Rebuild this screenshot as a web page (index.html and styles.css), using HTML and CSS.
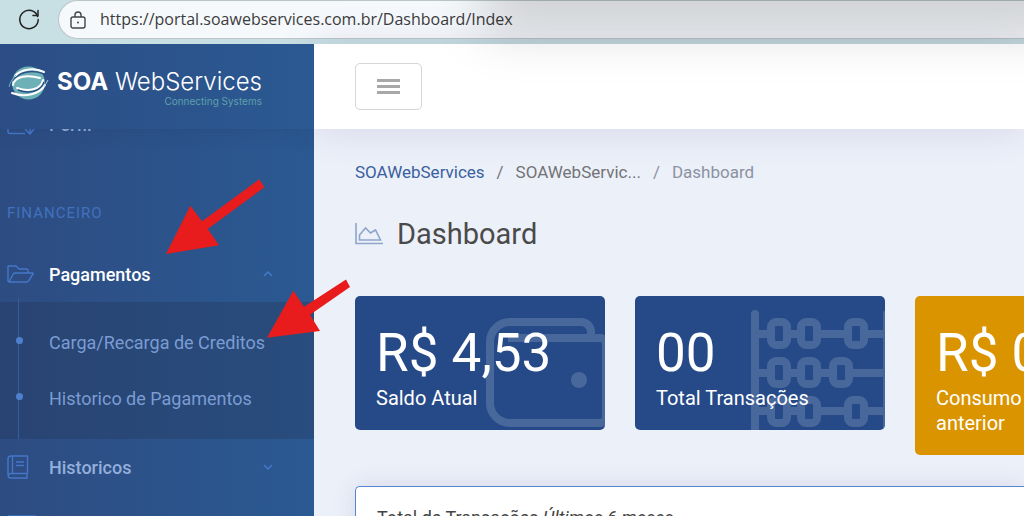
FILE: index.html
```
<!DOCTYPE html>
<html lang="pt-br">
<head>
  <meta charset="UTF-8" />
  <meta name="viewport" content="width=device-width, initial-scale=1" />
  <title>Dashboard - SOAWebServices</title>
  <link rel="stylesheet" href="styles.css">
</head>
<body>
  <div class="browser-bar">
    <button class="btn-reload" aria-label="Atualizar">
      <svg width="24" height="24" viewBox="0 0 24 24" fill="none" stroke="#222" stroke-width="1.500" stroke-linecap="round" stroke-linejoin="round">
        <path d="M20.700 9.500A9.200 9.200 0 1 0 21.200 12.500" />
        <path d="M21 3.500V8.500H16" />
      </svg>
    </button>
    <div class="address">
      <svg width="16" height="18" viewBox="0 0 16 18" fill="none" stroke="#444" stroke-width="1.400">
        <rect x="1" y="6" width="14" height="11" rx="2" />
        <path d="M5 6V4a3 3 0 0 1 6 0v2" />
        <circle cx="8" cy="11.500" r="1" fill="#444" stroke="none" />
      </svg>
      <input type="text" class="url" aria-label="Endereço" value="https://portal.soawebservices.com.br/Dashboard/Index">
    </div>
  </div>

  <div class="page">
    <aside class="sidebar">
      <a href="#" class="brand">
        <svg width="42" height="36" viewBox="0 0 42 36" fill="none">
          <circle cx="20.500" cy="18" r="16.500" fill="#6db1b6" />
          <path d="M5 16C10 7 24 4 36 9" stroke="#2c5088" stroke-width="1.500" />
          <path d="M7 11C14 3 28 3 36 7" stroke="#fff" stroke-width="2" stroke-linecap="round" />
          <path d="M5 20C6 12 18 9 32 13" stroke="#fff" stroke-width="2" stroke-linecap="round" />
          <path d="M9 23C20 27 33 25 35 15" stroke="#fff" stroke-width="2" stroke-linecap="round" />
          <path d="M10 25C20 29 33 27 36 17" stroke="#2c5088" stroke-width="1.500" />
          <path d="M4 28C17 33 32 29 37 20" stroke="#fff" stroke-width="2" stroke-linecap="round" />
          <path d="M36 22L40 15" stroke="#b5d5dc" stroke-width="1" />
          <path d="M1 22C2 18 4 14 8 10" stroke="#6db1b6" />
        </svg>
        <span class="brand-text">
          <span class="brand-name"><b>SOA</b> WebServices</span>
          <span class="brand-slogan">Connecting Systems</span>
        </span>
      </a>

      <nav class="nav">
        <ul class="menu">
          <li>
            <a href="#" class="item">
              <svg width="28" height="22" viewBox="0 0 28 22" fill="none" stroke="#4577c8" stroke-width="1.500">
                <path d="M18 20.500H3a2 2 0 0 1-2-2V3a2 2 0 0 1 2-2h20a2 2 0 0 1 2 2v9" />
                <path d="M23 11v10M18 16l5 5 4-5" />
              </svg>
              <span>Perfil</span>
            </a>
          </li>
          <li class="menu-title">FINANCEIRO</li>
          <li>
            <a href="#" class="item active">
              <svg width="28" height="20" viewBox="0 0 28 20" fill="none" stroke="#4577c8" stroke-width="1.400" stroke-linejoin="round">
                <path d="M2 18L1 17V2.500L2 2H9L12 5H20L21 6V9" />
                <path d="M2 18L6.500 9.500L8 9H26V10L21.500 17L20 18Z" />
              </svg>
              <span>Pagamentos</span>
              <svg class="chevron" width="10" height="6" viewBox="0 0 10 6" fill="none" stroke="#4577c8" stroke-width="1.500"><path d="M1 5l4-4 4 4" /></svg>
            </a>
            <ul class="submenu">
              <li><a href="#" class="subitem">Carga/Recarga de Creditos</a></li>
              <li><a href="#" class="subitem">Historico de Pagamentos</a></li>
            </ul>
          </li>
          <li>
            <a href="#" class="item">
              <svg width="28" height="24" viewBox="0 0 28 24" fill="none" stroke="#4577c8" stroke-width="1.400">
                <path d="M20.500 18.500V1H4Q1 1 1 4V20" />
                <path d="M20.500 18.500H3.500a2 2 0 0 0 0 4.500H20V18.500M5.500 1V18.500M9 7H17M9 10.500H17" />
              </svg>
              <span>Historicos</span>
              <svg class="chevron" width="10" height="6" viewBox="0 0 10 6" fill="none" stroke="#4577c8" stroke-width="1.500"><path d="M1 1l4 4 4-4" /></svg>
            </a>
          </li>
          <li>
            <a href="#" class="item" aria-label="Menu">
              <svg width="30" height="16" viewBox="0 0 30 16" fill="none" stroke="#4577c8" stroke-width="1.500"><rect x="1" y="1" width="28" height="14" rx="1" /></svg>
            </a>
          </li>
        </ul>
      </nav>
    </aside>

    <div class="content">
      <header class="topbar">
        <button class="btn-menu" aria-label="Abrir menu">
          <svg width="23" height="16" viewBox="0 0 23 16" fill="#a8a8a8"><path d="M0 0h23v3H0zM0 6h23v3H0zM0 12h23v3H0z" /></svg>
        </button>
      </header>

      <main>
        <ol class="breadcrumb">
          <li><a href="#">SOAWebServices</a></li>
          <li>SOAWebServic...</li>
          <li class="current">Dashboard</li>
        </ol>

        <h1>
          <svg width="28" height="22" viewBox="0 0 28 22" fill="none" stroke="#8fa5cc" stroke-width="1.600">
            <path d="M1 0V20.500H28" />
            <path d="M4.500 17V12L10.500 5L15.500 10L20.500 7L25.500 17Z" />
          </svg>
          Dashboard
        </h1>

        <div class="cards">
          <div class="card">
            <svg class="card-icon wallet" width="124" height="109" viewBox="0 0 124 109" fill="none" stroke="#fff" stroke-width="8" opacity=".16">
              <path d="M105 16V14a10 10 0 0 0-10-10H24A20 20 0 0 0 4 24V85a20 20 0 0 0 20 20H114a6 6 0 0 0 6-6V26a6 6 0 0 0-6-6H22" />
              <circle cx="93" cy="62" r="8" fill="#fff" stroke="none" />
            </svg>
            <h3>R$ 4,53</h3>
            <p>Saldo Atual</p>
          </div>

          <div class="card">
            <svg class="card-icon abacus" width="140" height="124" viewBox="0 0 140 124" fill="none" stroke="#fff" stroke-width="8" opacity=".16">
              <path d="M4 124V4M136 124V4" stroke-linecap="round" />
              <path d="M8 24h8M40 24h6M70 24h23M117 24h15" />
              <path d="M8 63h8M40 63h6M70 63h8M102 63h30" />
              <path d="M8 101h8M40 101h6M70 101h23M117 101h15" />
              <rect x="20" y="12" width="16" height="23" rx="5" />
              <rect x="50" y="12" width="16" height="23" rx="5" />
              <rect x="97" y="12" width="16" height="23" rx="5" />
              <rect x="20" y="51" width="16" height="23" rx="5" />
              <rect x="50" y="51" width="16" height="23" rx="5" />
              <rect x="82" y="51" width="16" height="23" rx="5" />
              <rect x="20" y="90" width="16" height="23" rx="5" />
              <rect x="50" y="90" width="16" height="23" rx="5" />
              <rect x="97" y="90" width="16" height="23" rx="5" />
            </svg>
            <h3>00</h3>
            <p>Total Transações</p>
          </div>

          <div class="card card-warning">
            <h3>R$ 0</h3>
            <p>Consumo<br>anterior</p>
          </div>
        </div>

        <section class="panel">
          <h2>Total de Transações <em>Últimos 6 meses</em></h2>
        </section>
      </main>
    </div>
  </div>

  <div class="window-shadow"></div>

  <!-- setas do passo a passo -->
  <svg class="arrow arrow-1" width="100" height="76" viewBox="0 0 100 76">
    <polygon fill="#e81c1c" points="0,75 24.300,26.700 36,42.300 93.300,0.300 98.300,8.300 41.700,50 53,66.300" />
  </svg>
  <svg class="arrow arrow-2" width="84" height="60" viewBox="0 0 84 60">
    <polygon fill="#e81c1c" points="0,58.700 26.300,11.700 37,27.700 79,0.500 83,8 43,35.700 53,52" />
  </svg>
</body>
</html>
```
FILE: styles.css
```
* {
  box-sizing: border-box;
}
body {
  margin: 0;
  height: 100vh;
  overflow: hidden;
  position: relative;
  display: flex;
  flex-direction: column;
  font-family: Roboto, "Liberation Sans", sans-serif;
  font-size: 18px;
  background: #ecf0f9;
}
ul, ol {
  list-style: none;
  margin: 0;
  padding: 0;
}
a {
  text-decoration: none;
}
h1, h2, h3, p {
  margin: 0;
  font-weight: 400;
}
svg {
  display: block;
  flex-shrink: 0;
}

/* barra do navegador */
.browser-bar {
  flex-shrink: 0;
  display: flex;
  align-items: flex-start;
  height: 44px;
  padding-left: 17px;
  background: #c8dfe3;
}
.btn-reload {
  margin-top: 7px;
  padding: 0;
  width: 24px;
  border: none;
  background: none;
}
.address {
  flex: 1;
  display: flex;
  align-items: center;
  gap: 14px;
  height: 39px;
  margin-left: 17px;
  padding-left: 11px;
  border: 1px solid #bcc6c9;
  border-right: none;
  border-radius: 20px 0 0 20px;
  background: #f6f9fc;
}
.url {
  flex: 1;
  padding: 0 0 2px;
  border: none;
  outline: none;
  background: none;
  font-family: "Open Sans", "Noto Sans", sans-serif;
  font-size: 16px;
  color: #3c3c3c;
}
.window-shadow {
  position: absolute;
  top: -60px;
  left: 500px;
  right: -80px;
  height: 60px;
  box-shadow: 0 14px 54px 16px rgba(0, 0, 0, 0.17);
}

.page {
  flex: 1;
  display: flex;
  min-height: 0;
}

/* menu lateral */
.sidebar {
  width: 314px;
  flex-shrink: 0;
  overflow: hidden;
  background: linear-gradient(90deg, #2d4c82, #2b5992);
}
.brand {
  position: relative;
  z-index: 1;
  display: flex;
  align-items: flex-start;
  gap: 7px;
  height: 85px;
  padding: 21px 0 0 8px;
  background: linear-gradient(90deg, #2c4d85, #2b5992);
  box-shadow: 0 0 20px rgba(30, 50, 90, 0.2);
  color: #fff;
}
.brand-text {
  display: flex;
  flex-direction: column;
  align-items: flex-end;
  padding-top: 4px;
}
.brand-name {
  font-family: Inter, sans-serif;
  font-size: 24px;
  font-weight: 300;
  line-height: 26px;
}
.brand-name b {
  font-weight: 700;
}
.brand-slogan {
  font-family: Inter, sans-serif;
  font-size: 10px;
  line-height: 12px;
  color: #5da0ac;
}
/* lista rolada por baixo do logo */
.nav {
  margin-top: -33px;
}
.item {
  display: flex;
  align-items: center;
  gap: 14px;
  height: 56px;
  padding: 0 41px 0 7px;
  color: #94afdb;
  font-weight: 500;
}
.item.active {
  color: #fff;
}
.chevron {
  margin-left: auto;
}
.menu-title {
  padding: 51px 7px 23px;
  font-size: 15px;
  line-height: 20px;
  letter-spacing: 1px;
  color: #4271be;
}
.submenu {
  position: relative;
  padding: 13px 0 12px;
  background: rgba(34, 50, 80, 0.3);
}
.submenu::before {
  content: "";
  position: absolute;
  left: 18px;
  top: -4px;
  bottom: 0;
  width: 1px;
  background: #355d9e;
}
.subitem {
  position: relative;
  display: flex;
  align-items: center;
  height: 56px;
  padding: 0 0 2px 49px;
  color: #7b9cd3;
}
.subitem::before {
  content: "";
  position: absolute;
  left: 16px;
  top: 22px;
  width: 7px;
  height: 7px;
  border-radius: 50%;
  background: #4f80d0;
}

/* conteudo */
.content {
  flex: 1;
  min-width: 0;
}
.topbar {
  display: flex;
  align-items: center;
  height: 85px;
  padding-left: 41px;
  background: #fff;
  box-shadow: 0 0 40px rgba(70, 60, 110, 0.14);
}
.btn-menu {
  display: flex;
  align-items: center;
  justify-content: center;
  width: 67px;
  height: 47px;
  border: 1px solid #d6d6d6;
  border-radius: 5px;
  background: #fff;
}
main {
  padding: 31px 0 0 41px;
}
.breadcrumb {
  display: flex;
  font-size: 17px;
  line-height: 24px;
  color: #737377;
}
.breadcrumb li + li::before {
  content: "/";
  padding: 0 12px;
}
.breadcrumb a {
  color: #3a5f9e;
}
.breadcrumb .current {
  color: #8a92a2;
}
h1 {
  display: flex;
  align-items: center;
  gap: 14px;
  margin-top: 32px;
  font-size: 29px;
  line-height: 36px;
  color: #4a4a4a;
}
.cards {
  display: grid;
  grid-template-columns: repeat(3, 250px);
  gap: 30px;
  align-items: start;
  margin-top: 44px;
}
.card {
  position: relative;
  overflow: hidden;
  padding: 31px 21px 19px;
  border-radius: 5px;
  background: #264a87;
  color: #fff;
}
.card-warning {
  background: #da9400;
}
.card-icon {
  position: absolute;
}
.wallet {
  left: 131px;
  top: 22px;
}
.abacus {
  left: 116px;
  top: 14px;
}
.card h3 {
  position: relative;
  font-size: 53px;
  line-height: 53px;
}
.card p {
  position: relative;
  padding-top: 6px;
  font-size: 20px;
  line-height: 25px;
}
.panel {
  margin-top: 31px;
  padding: 18px 21px;
  min-height: 200px;
  border: 1px solid #5585d0;
  border-right: none;
  border-radius: 5px 0 0 0;
  background: #fff;
  box-shadow: 0 0 25px rgba(70, 60, 110, 0.12);
}
.panel h2 {
  font-size: 18px;
  line-height: 26px;
  color: #444;
}

.arrow {
  position: absolute;
}
.arrow-1 {
  left: 166px;
  top: 179px;
}
.arrow-2 {
  left: 267px;
  top: 279px;
}
```
